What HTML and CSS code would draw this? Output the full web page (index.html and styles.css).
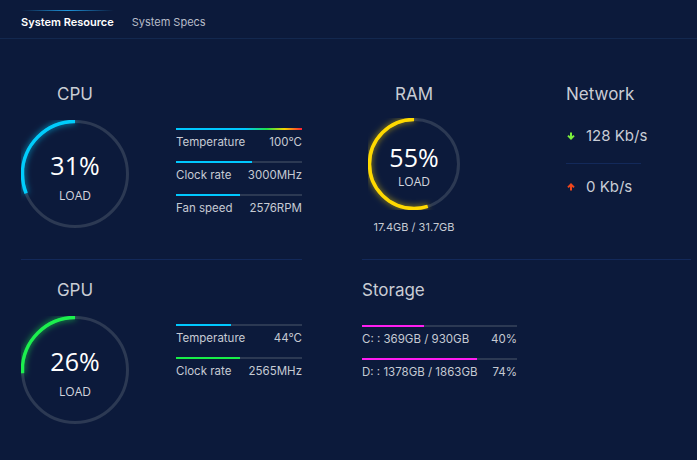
FILE: index.html
```html
<!DOCTYPE html>
<html lang="en">
<head>
    <meta charset="UTF-8">
    <meta name="viewport" content="width=device-width, initial-scale=1.0">
    <title>System Resource</title>
    <link rel="stylesheet" href="styles.css">
</head>
<body>
    <nav class="tabs">
        <div class="tab active">System Resource</div>
        <div class="tab">System Specs</div>
    </nav>

    <main class="board">
        <!-- CPU -->
        <section class="panel panel-top">
            <div class="gauge-block">
                <h2 class="title">CPU</h2>
                <div class="ring ring-lg">
                    <svg width="108" height="108" viewBox="0 0 108 108">
                        <circle class="track" cx="54" cy="54" r="52.5"></circle>
                        <circle class="arc arc-cyan" cx="54" cy="54" r="52.5" pathLength="100" stroke-dasharray="31 100" transform="translate(108 0) scale(-1 1) rotate(-90 54 54)"></circle>
                    </svg>
                    <div class="ring-text">
                        <span class="pct">31%</span>
                        <span class="load">LOAD</span>
                    </div>
                </div>
            </div>
            <div class="stats">
                <div class="stat">
                    <div class="bar"><div class="fill fill-heat" style="width:100%"></div></div>
                    <div class="stat-row"><span>Temperature</span><span>100°C</span></div>
                </div>
                <div class="stat">
                    <div class="bar"><div class="fill fill-cyan" style="width:60%"></div></div>
                    <div class="stat-row"><span>Clock rate</span><span>3000MHz</span></div>
                </div>
                <div class="stat">
                    <div class="bar"><div class="fill fill-cyan" style="width:51%"></div></div>
                    <div class="stat-row"><span>Fan speed</span><span>2576RPM</span></div>
                </div>
            </div>
        </section>

        <!-- RAM + Network -->
        <section class="panel panel-top">
            <div class="gauge-block ram">
                <h2 class="title">RAM</h2>
                <div class="ring ring-sm">
                    <svg width="92" height="92" viewBox="0 0 92 92">
                        <circle class="track" cx="46" cy="46" r="44.5"></circle>
                        <circle class="arc arc-yellow" cx="46" cy="46" r="44.5" pathLength="100" stroke-dasharray="55 100" transform="translate(92 0) scale(-1 1) rotate(-90 46 46)"></circle>
                    </svg>
                    <div class="ring-text">
                        <span class="pct">55%</span>
                        <span class="load">LOAD</span>
                    </div>
                </div>
                <div class="caption">17.4GB / 31.7GB</div>
            </div>
            <div class="network">
                <h2 class="title">Network</h2>
                <div class="net-row net-down">
                    <svg class="net-icon" width="8" height="8" viewBox="0 0 8 8"><path d="M4 0.5v6M1 3.6l3 3 3-3" fill="none" stroke="#7cf03c" stroke-width="2"/></svg>
                    <span>128 Kb/s</span>
                </div>
                <div class="net-row net-up">
                    <svg class="net-icon" width="8" height="8" viewBox="0 0 8 8"><path d="M4 7.5v-6M1 4.4l3-3 3 3" fill="none" stroke="#f0461c" stroke-width="2"/></svg>
                    <span>0 Kb/s</span>
                </div>
            </div>
        </section>

        <!-- GPU -->
        <section class="panel panel-bottom">
            <div class="gauge-block">
                <h2 class="title">GPU</h2>
                <div class="ring ring-lg">
                    <svg width="108" height="108" viewBox="0 0 108 108">
                        <circle class="track" cx="54" cy="54" r="52.5"></circle>
                        <circle class="arc arc-green" cx="54" cy="54" r="52.5" pathLength="100" stroke-dasharray="26 100" transform="translate(108 0) scale(-1 1) rotate(-90 54 54)"></circle>
                    </svg>
                    <div class="ring-text">
                        <span class="pct">26%</span>
                        <span class="load">LOAD</span>
                    </div>
                </div>
            </div>
            <div class="stats">
                <div class="stat">
                    <div class="bar"><div class="fill fill-cyan" style="width:44%"></div></div>
                    <div class="stat-row"><span>Temperature</span><span>44°C</span></div>
                </div>
                <div class="stat">
                    <div class="bar"><div class="fill fill-green" style="width:51%"></div></div>
                    <div class="stat-row"><span>Clock rate</span><span>2565MHz</span></div>
                </div>
            </div>
        </section>

        <!-- Storage -->
        <section class="panel panel-bottom storage">
            <h2 class="title">Storage</h2>
            <div class="stats">
                <div class="stat">
                    <div class="bar"><div class="fill fill-pink" style="width:40%"></div></div>
                    <div class="stat-row"><span>C: : 369GB / 930GB</span><span>40%</span></div>
                </div>
                <div class="stat">
                    <div class="bar"><div class="fill fill-pink" style="width:74%"></div></div>
                    <div class="stat-row"><span>D: : 1378GB / 1863GB</span><span>74%</span></div>
                </div>
            </div>
        </section>
    </main>
</body>
</html>
```

FILE: styles.css
```css
body {
    margin: 0;
    height: 100vh;
    overflow: hidden;
    background: #0c1a3b;
    color: #c9cdd6;
    font-family: Inter, "Noto Sans", sans-serif;
}

h2 {
    margin: 0;
    font-weight: 400;
}

/* tabs */

.tabs {
    display: flex;
    gap: 18px;
    padding: 10px 0 8px 21px;
    border-bottom: 1px solid #13284f;
}

.tab {
    padding-top: 4px;
    font-size: 11px;
    line-height: 16px;
    color: #b7bcc8;
}

.tab.active {
    color: #ffffff;
    font-weight: 600;
    background: linear-gradient(90deg, rgba(30, 144, 214, 0), #1e95dc 50%, rgba(30, 144, 214, 0)) no-repeat top / 100% 1px;
}

/* board */

.board {
    display: grid;
    grid-template-columns: 281px 329px;
    column-gap: 60px;
    padding: 0 6px 0 21px;
}

.panel {
    display: flex;
    border-bottom: 1px solid #13295a;
}

.panel-top {
    height: 176px;
    padding-top: 44px;
}

.panel-bottom {
    padding-top: 19px;
    border-bottom: none;
}

.title {
    font-size: 17px;
    line-height: 20px;
    margin-top: 1px;
    color: #c9ccd4;
}

.gauge-block {
    display: flex;
    flex-direction: column;
    align-items: center;
    width: 108px;
}

.gauge-block .title {
    margin-bottom: 16px;
}

/* rings */

.ring {
    position: relative;
}

.ring svg {
    display: block;
}

.track {
    fill: none;
    stroke: #2c3953;
    stroke-width: 3;
}

.arc {
    fill: none;
    stroke-width: 3.5;
}

.arc-cyan {
    stroke: #00cdfc;
    filter: drop-shadow(0 0 3px rgba(0, 205, 252, 0.8));
}

.arc-yellow {
    stroke: #ffd900;
    filter: drop-shadow(0 0 3px rgba(255, 217, 0, 0.7));
}

.arc-green {
    stroke: #1cf04e;
    filter: drop-shadow(0 0 3px rgba(28, 240, 78, 0.8));
}

.ring-text {
    position: absolute;
    inset: 0;
    display: flex;
    flex-direction: column;
    align-items: center;
    justify-content: center;
    padding-top: 7px;
    font-family: "Open Sans", sans-serif;
}

.pct {
    font-size: 25px;
    line-height: 26px;
    color: #ffffff;
}

.load {
    margin-top: 11px;
    font-size: 12px;
    line-height: 14px;
    color: #d4d7de;
}

.ring-sm .ring-text {
    padding-top: 4px;
}

.ring-sm .load {
    margin-top: 5px;
}

/* stat bars */

.stats {
    display: flex;
    flex-direction: column;
    gap: 11px;
    width: 126px;
    margin-top: 45px;
    margin-left: 47px;
}

.bar {
    height: 2px;
    background: #2c3953;
}

.fill {
    height: 100%;
}

.fill-heat {
    background: linear-gradient(90deg, #00c8ff 0%, #00c8ff 55%, #1ee04a 72%, #f2d600 86%, #ff1e32 100%);
}

.fill-cyan {
    background: #00c8ff;
}

.fill-green {
    background: #18ee48;
}

.fill-pink {
    background: #ff1ef0;
}

.stat-row {
    display: flex;
    justify-content: space-between;
    margin-top: 4px;
    font-size: 11.5px;
    line-height: 16px;
    color: #c6cad3;
}

/* ram + network */

.ram {
    width: 104px;
}

.ram .title {
    margin-bottom: 14px;
}

.caption {
    margin-top: 10px;
    font-size: 11px;
    line-height: 14px;
    color: #c6cad3;
}

.network {
    width: 75px;
    margin-left: 100px;
}

.net-row {
    display: flex;
    align-items: center;
    gap: 11px;
    padding-left: 1px;
    font-size: 15px;
    line-height: 18px;
    white-space: nowrap;
    color: #c9cdd6;
}

.net-icon {
    flex-shrink: 0;
}

.net-down {
    margin-top: 23px;
    padding-bottom: 18px;
    border-bottom: 1px solid #13295a;
}

.net-up {
    padding-top: 14px;
}

/* storage */

.storage {
    flex-direction: column;
}

.storage .stats {
    width: 155px;
    margin: 25px 0 0;
}
```
